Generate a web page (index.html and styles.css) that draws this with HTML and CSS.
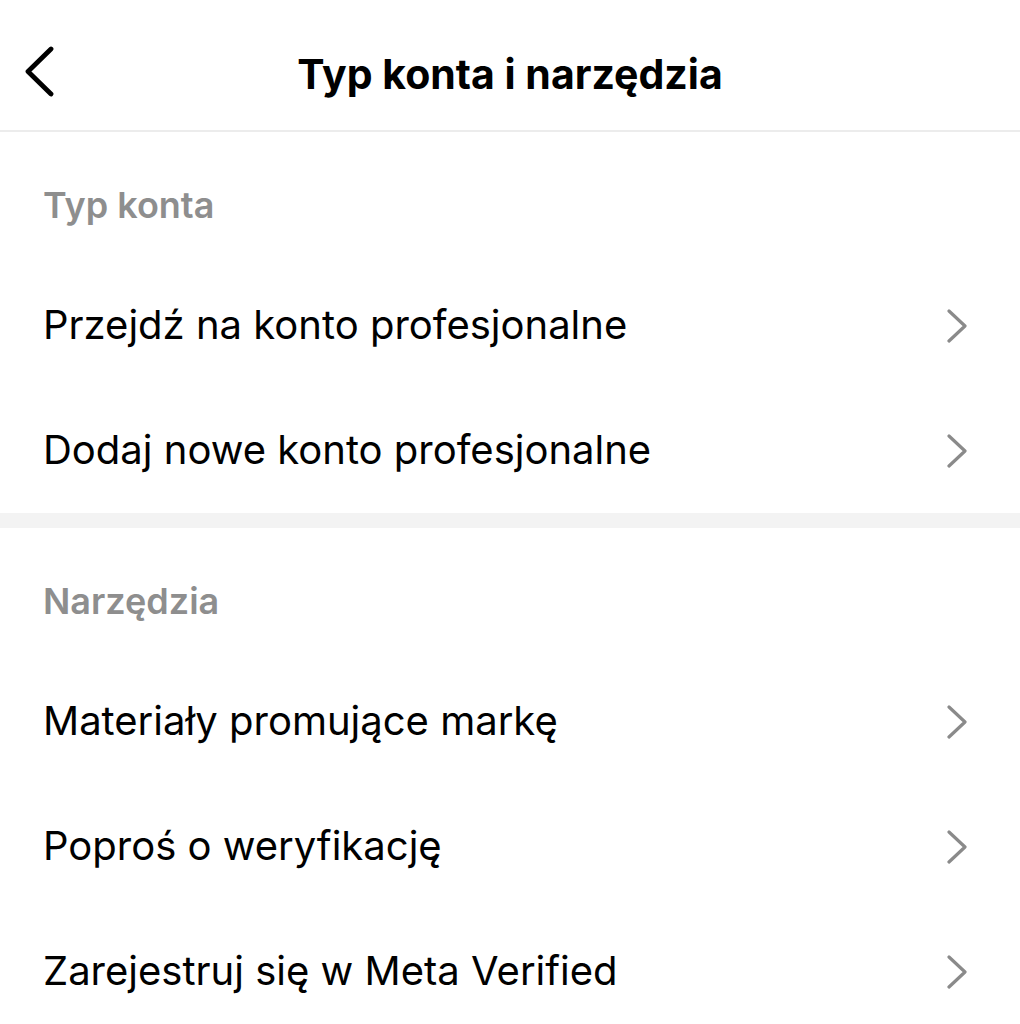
FILE: index.html
```html
<!DOCTYPE html>
<html lang="pl">

<head>
    <meta charset="UTF-8">
    <meta name="viewport" content="width=device-width, initial-scale=1.0">
    <title>Typ konta i narzędzia</title>
    <link rel="stylesheet" href="styles.css">
</head>

<body>
<div class="screen">
    <!-- Top bar -->
    <div class="topbar">
        <svg class="back" width="32" height="52" viewBox="0 0 32 52">
            <polyline points="28,3 5,25.5 28,48" />
        </svg>
        <h1>Typ konta i narzędzia</h1>
    </div>

    <!-- Account type -->
    <div class="section">
        <div class="section-title">Typ konta</div>
        <div class="row">
            <span>Przejdź na konto profesjonalne</span>
            <svg class="chevron" width="24" height="34" viewBox="0 0 24 34"><polyline points="3,2 19,17 3,32" /></svg>
        </div>
        <div class="row">
            <span>Dodaj nowe konto profesjonalne</span>
            <svg class="chevron" width="24" height="34" viewBox="0 0 24 34"><polyline points="3,2 19,17 3,32" /></svg>
        </div>
    </div>

    <div class="spacer"></div>

    <!-- Tools -->
    <div class="section">
        <div class="section-title">Narzędzia</div>
        <div class="row">
            <span>Materiały promujące markę</span>
            <svg class="chevron" width="24" height="34" viewBox="0 0 24 34"><polyline points="3,2 19,17 3,32" /></svg>
        </div>
        <div class="row">
            <span>Poproś o weryfikację</span>
            <svg class="chevron" width="24" height="34" viewBox="0 0 24 34"><polyline points="3,2 19,17 3,32" /></svg>
        </div>
        <div class="row">
            <span>Zarejestruj się w Meta Verified</span>
            <svg class="chevron" width="24" height="34" viewBox="0 0 24 34"><polyline points="3,2 19,17 3,32" /></svg>
        </div>
    </div>
</div>
</body>

</html>
```

FILE: styles.css
```css
body {
    margin: 0;
    padding: 0;
    background-color: #fff;
    font-family: Inter, Roboto, 'Noto Sans', sans-serif;
    color: #000;
    overflow: hidden;
}

.screen {
    width: 1020px;
}

.topbar {
    position: relative;
    height: 130px;
    border-bottom: 2px solid #ececec;
    display: flex;
    align-items: center;
    justify-content: center;
}

.topbar h1 {
    margin: 0;
    margin-top: 18px;
    font-size: 41px;
    font-weight: 700;
}

.back {
    position: absolute;
    left: 23px;
    top: 46px;
    fill: none;
    stroke: #000;
    stroke-width: 4.8;
    stroke-linecap: round;
    stroke-linejoin: round;
}

.section-title {
    height: 131px;
    box-sizing: border-box;
    padding: 50px 0 0 43px;
    font-size: 36px;
    font-weight: 600;
    color: #8e8e8e;
    line-height: 46px;
}

.row {
    height: 125px;
    display: flex;
    align-items: center;
    justify-content: space-between;
    padding: 0 50px 0 43px;
    font-size: 40px;
}

.row span {
    margin-top: -2px;
}

.chevron {
    fill: none;
    stroke: #8a8a8a;
    stroke-width: 3.2;
    stroke-linecap: round;
    stroke-linejoin: round;
}

.spacer {
    height: 15px;
    background-color: #f3f3f3;
}
```
